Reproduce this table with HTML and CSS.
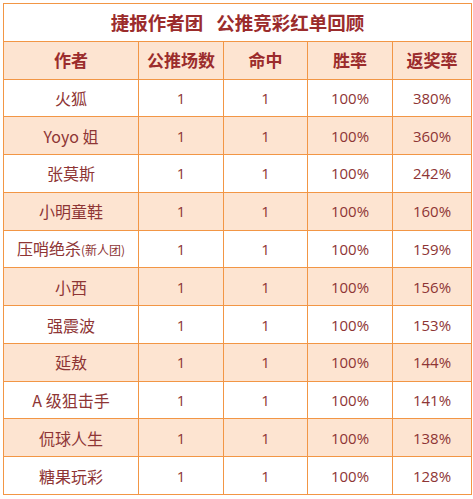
FILE: index.html
```html
<!DOCTYPE html>
<html>
<head>
<meta charset="utf-8">
<link rel="stylesheet" href="styles.css">
</head>
<body>
<table class="board">
  <colgroup>
    <col class="c-name"><col class="c-count"><col class="c-hit"><col class="c-rate"><col class="c-ret">
  </colgroup>
  <tr class="title"><td colspan="5">捷报作者团 公推竞彩红单回顾</td></tr>
  <tr class="head"><th>作者</th><th>公推场数</th><th>命中</th><th>胜率</th><th>返奖率</th></tr>
  <tr><td class="name">火狐</td><td class="num">1</td><td class="num">1</td><td class="num">100%</td><td class="num">380%</td></tr>
  <tr class="alt"><td class="name">Yoyo 姐</td><td class="num">1</td><td class="num">1</td><td class="num">100%</td><td class="num">360%</td></tr>
  <tr><td class="name">张莫斯</td><td class="num">1</td><td class="num">1</td><td class="num">100%</td><td class="num">242%</td></tr>
  <tr class="alt"><td class="name">小明童鞋</td><td class="num">1</td><td class="num">1</td><td class="num">100%</td><td class="num">160%</td></tr>
  <tr><td class="name">压哨绝杀<span class="small">(新人团)</span></td><td class="num">1</td><td class="num">1</td><td class="num">100%</td><td class="num">159%</td></tr>
  <tr class="alt"><td class="name">小西</td><td class="num">1</td><td class="num">1</td><td class="num">100%</td><td class="num">156%</td></tr>
  <tr><td class="name">强震波</td><td class="num">1</td><td class="num">1</td><td class="num">100%</td><td class="num">153%</td></tr>
  <tr class="alt"><td class="name">延敖</td><td class="num">1</td><td class="num">1</td><td class="num">100%</td><td class="num">144%</td></tr>
  <tr><td class="name">A 级狙击手</td><td class="num">1</td><td class="num">1</td><td class="num">100%</td><td class="num">141%</td></tr>
  <tr class="alt"><td class="name">侃球人生</td><td class="num">1</td><td class="num">1</td><td class="num">100%</td><td class="num">138%</td></tr>
  <tr><td class="name">糖果玩彩</td><td class="num">1</td><td class="num">1</td><td class="num">100%</td><td class="num">128%</td></tr>
</table>
</body>
</html>
```
FILE: styles.css
```css
html, body {
  margin: 0;
  padding: 0;
  background: #ffffff;
}
body {
  padding: 3px 0 0 3px;
}
.board {
  border-collapse: collapse;
  table-layout: fixed;
  width: 468px;
  font-family: "Open Sans", "Noto Sans CJK SC", sans-serif;
  color: #8e3535;
}
.c-name { width: 135px; }
.c-count { width: 85px; }
.c-hit { width: 84px; }
.c-rate { width: 85px; }
.c-ret { width: 79px; }
.board tr {
  height: 37.77px;
}
.board td, .board th {
  border: 1px solid #f29645;
  text-align: center;
  vertical-align: middle;
  padding: 0;
  line-height: 20px;
}
.title td {
  font-family: "Noto Sans CJK SC", sans-serif;
  font-size: 18.5px;
  font-weight: bold;
  color: #9b2c2c;
  word-spacing: 9px;
  background: #ffffff;
}
.head th {
  background: #fde4d1;
  font-family: "Noto Sans CJK SC", sans-serif;
  font-size: 17px;
  font-weight: bold;
  color: #9b2c2c;
}
.alt td {
  background: #fde4d1;
}
.name {
  font-family: "Noto Sans CJK SC", sans-serif;
  font-size: 16px;
}
.num {
  font-size: 15px;
}
.small {
  font-size: 12px;
}
```
